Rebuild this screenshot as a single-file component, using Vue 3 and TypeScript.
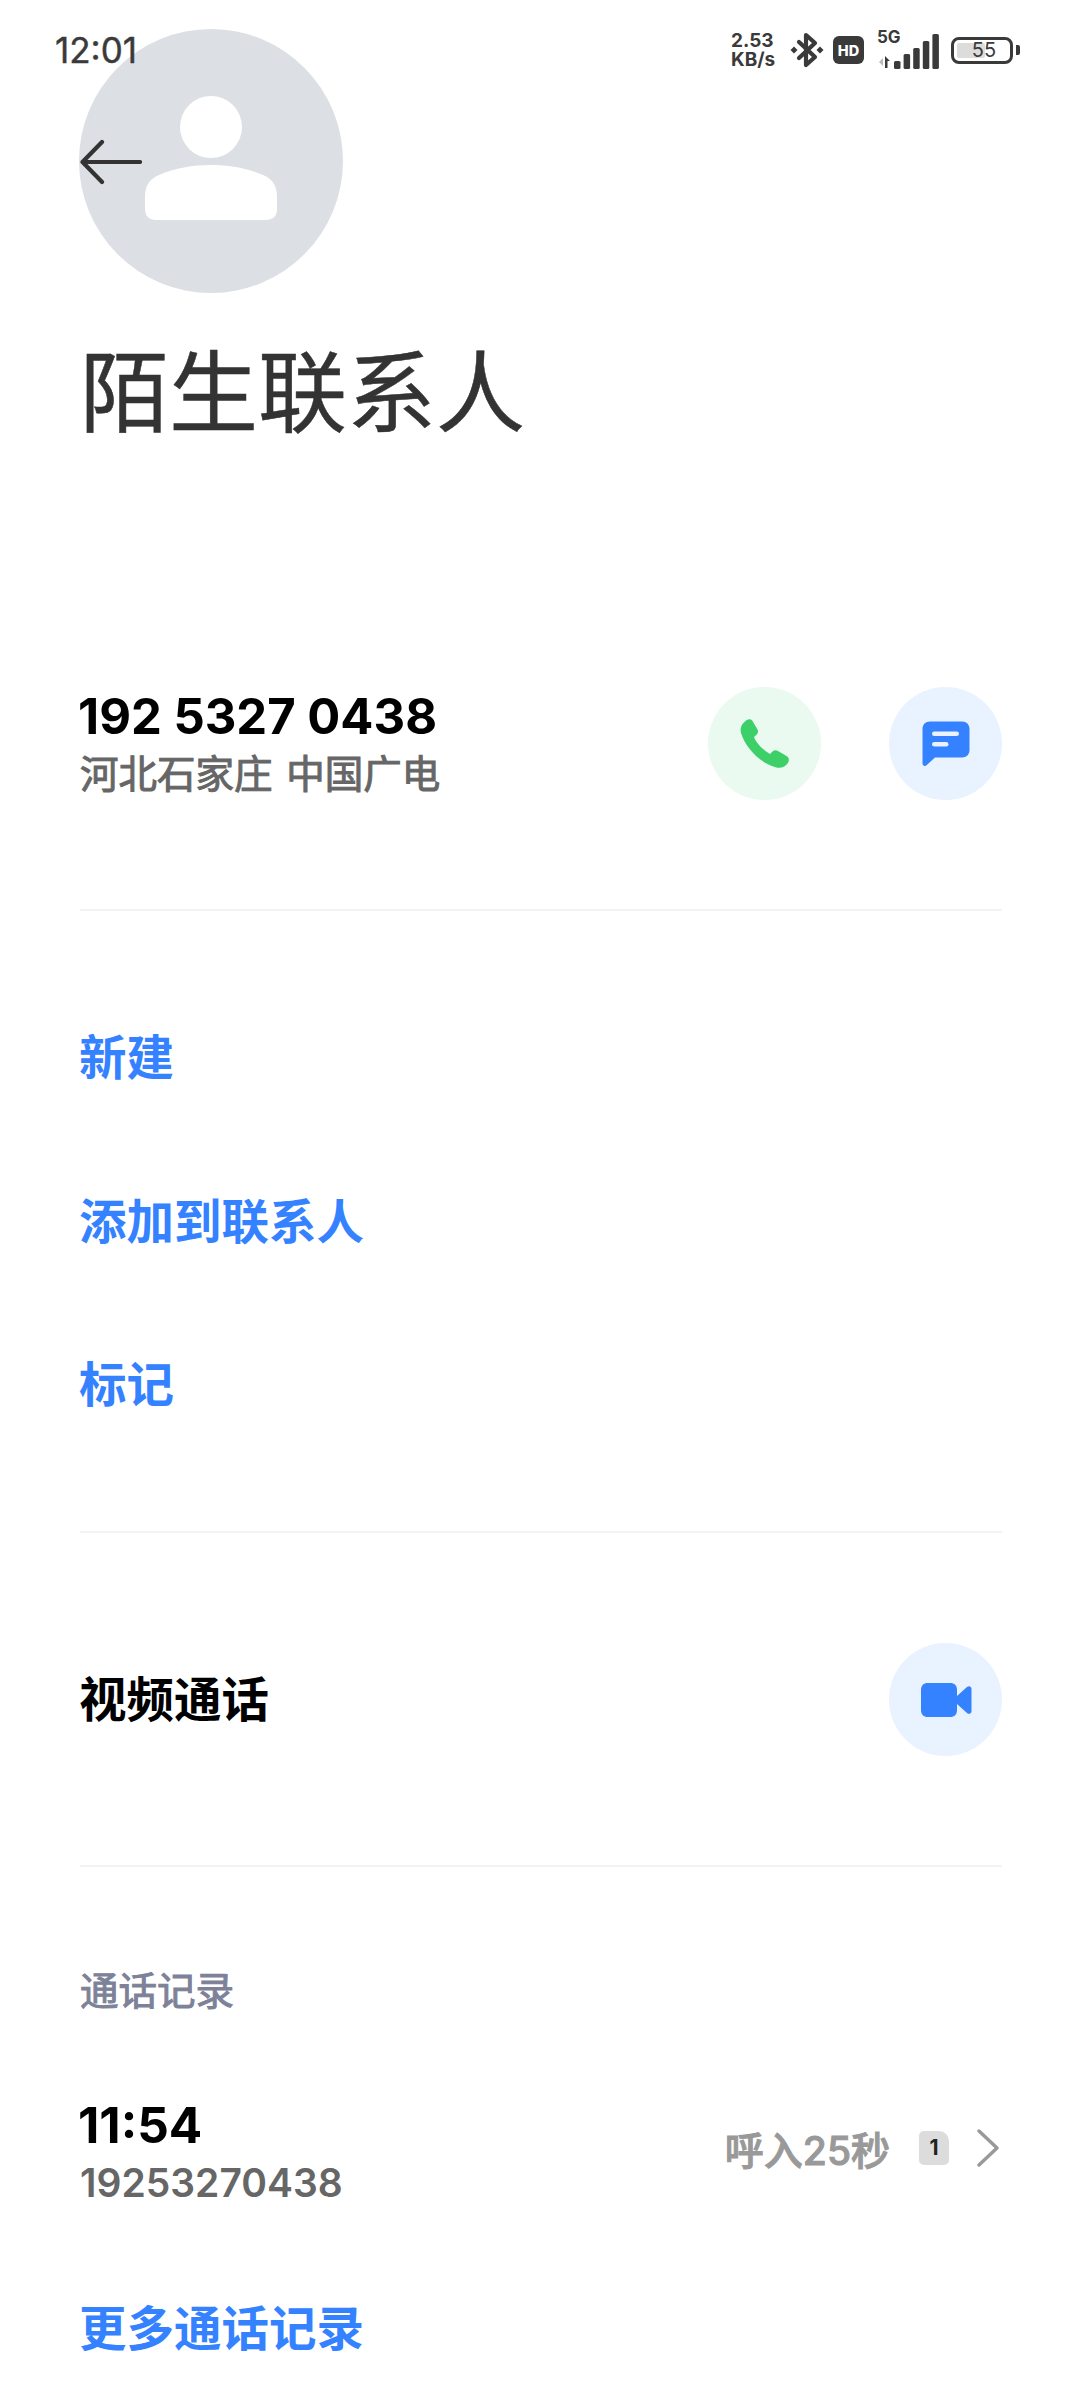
<script setup lang="ts">
const links: string[] = ['新建', '添加到联系人', '标记']
const bars: number[] = [8, 15, 21, 28, 35]
</script>

<template>
  <main class="page">
    <header class="status">
      <span class="clock">12:01</span>
      <div class="status-right">
        <div class="speed"><span>2.53</span><span>KB/s</span></div>
        <svg class="bt" viewBox="0 0 34 36" width="34" height="36">
          <path d="M9 10 L25 25 L16 33 V3 L25 11 L9 26" fill="none" stroke="#3a3a3a" stroke-width="4.200" stroke-linejoin="round" stroke-linecap="round" />
          <path d="M4 14.500 L7.500 18 L4 21.500 L0.500 18 Z M30 14.500 L33.500 18 L30 21.500 L26.500 18 Z" fill="#3a3a3a" />
        </svg>
        <span class="hd">HD</span>
        <div class="signal">
          <span class="fiveg">5G</span>
          <svg class="bars" viewBox="0 0 62 36" width="62" height="36">
            <path d="M1 29 L5 25 V33 Z" fill="#bbb" />
            <path d="M7 23 L12 28 H9.500 V35 H7 Z" fill="#3a3a3a" />
            <rect v-for="(h, i) in bars" :key="i" :x="16 + i * 9.6" :y="36 - h" width="6.500" :height="h" rx="1.500" fill="#3a3a3a" />
          </svg>
        </div>
        <div class="battery">
          <div class="cell"><span class="fill" /><span class="level">55</span></div>
          <span class="nub" />
        </div>
      </div>
    </header>

    <svg class="back" viewBox="0 0 62 46" width="62" height="46">
      <path d="M60 23 H3 M22 3 L2.500 23 L22 43" fill="none" stroke="#333" stroke-width="4.200" stroke-linecap="round" stroke-linejoin="round" />
    </svg>

    <section class="hero">
      <div class="avatar">
        <svg viewBox="0 0 132 126" width="132" height="126">
          <circle cx="66" cy="32" r="31" fill="#fff" />
          <path d="M0 102 C0 90 5 84 14 80 C30 73 48 70 66 70 C84 70 102 73 118 80 C127 84 132 90 132 102 V114 C132 121 128 125 121 125 H11 C4 125 0 121 0 114 Z" fill="#fff" />
        </svg>
      </div>
      <h1 class="name">陌生联系人</h1>
    </section>

    <section class="row number-row">
      <div class="number-info">
        <div class="number">192 5327 0438</div>
        <div class="region">河北石家庄 中国广电</div>
      </div>
      <div class="actions">
        <div class="round green">
          <svg viewBox="0 0 52 52" width="52" height="52">
            <path d="M6 3.500 C8.500 1 12 0.500 13.500 3 L18.500 11.500 C19.500 13.500 19 15.500 17.500 16.800 L15 19 C17.500 25.500 24 32 31 36 L33.500 33.500 C35 32 37 31.800 39 33 L47.500 38 C50.500 39.800 50.500 43 48.500 45.500 C46 49 42 50.500 37.500 49.500 C22 46 6.500 30 2 15 C0.800 10.500 2.500 6 6 3.500 Z" fill="#3DD068" />
          </svg>
        </div>
        <div class="round blue">
          <svg viewBox="0 0 48 46" width="48" height="46">
            <path d="M8 0.500 H40 C44.500 0.500 47.500 3.500 47.500 8 V29 C47.500 33.500 44.500 36.500 40 36.500 H13 L4.500 44.300 C3 45.700 0.500 44.800 0.500 42.500 V8 C0.500 3.500 3.500 0.500 8 0.500 Z" fill="#3482FF" />
            <rect x="10" y="10.500" width="27" height="4.600" rx="2.300" fill="#E9F2FF" />
            <rect x="10" y="21" width="16.500" height="4.600" rx="2.300" fill="#E9F2FF" />
          </svg>
        </div>
      </div>
    </section>

    <hr class="rule first" />

    <nav class="links">
      <a v-for="link in links" :key="link" class="link">{{ link }}</a>
    </nav>

    <hr class="rule second" />

    <section class="row video-row">
      <span class="video-label">视频通话</span>
      <div class="round blue">
        <svg viewBox="0 0 52 36" width="52" height="36">
          <path d="M8 1 H30 C34.500 1 37 3.500 37 8 V28 C37 32.500 34.500 35 30 35 H8 C3.500 35 1 32.500 1 28 V8 C1 3.500 3.500 1 8 1 Z" fill="#3482FF" />
          <path d="M37 14 L47 5 C49 3.300 51.500 4.300 51.500 7 V29 C51.500 31.700 49 32.700 47 31 L37 22 Z" fill="#3482FF" />
        </svg>
      </div>
    </section>

    <hr class="rule third" />

    <section class="history">
      <h2 class="history-title">通话记录</h2>
      <div class="row call">
        <div>
          <div class="call-time">11:54</div>
          <div class="call-number">19253270438</div>
        </div>
        <div class="call-meta">
          <span class="call-kind">呼入25秒</span>
          <span class="sim">1</span>
          <svg class="chevron" viewBox="0 0 24 38" width="24" height="38">
            <path d="M3 2 L21 19 L3 36" fill="none" stroke="#999" stroke-width="3.400" stroke-linecap="round" stroke-linejoin="round" />
          </svg>
        </div>
      </div>
      <a class="link more">更多通话记录</a>
    </section>
  </main>
</template>

<style scoped>
.page {
  position: relative;
  width: 1080px;
  height: 2400px;
  overflow: hidden;
  background: #fff;
  font-family: Inter, "Noto Sans CJK SC", sans-serif;
  color: #000;
}
.status {
  position: absolute;
  z-index: 2;
  left: 55px;
  right: 60px;
  top: 28px;
  height: 44px;
  display: flex;
  align-items: center;
  justify-content: space-between;
}
.clock {
  font-size: 35px;
  color: #3a3a3a;
  -webkit-text-stroke: 0.4px #3a3a3a;
}
.status-right {
  display: flex;
  align-items: center;
  color: #3a3a3a;
}
.speed {
  display: flex;
  flex-direction: column;
  width: 50px;
  font-size: 19px;
  line-height: 19px;
  font-weight: 700;
  margin-right: 9px;
}
.bt {
  margin-right: 9px;
}
.hd {
  width: 31px;
  height: 28px;
  margin-right: 12px;
  display: flex;
  align-items: center;
  justify-content: center;
  border-radius: 6px;
  background: #3a3a3a;
  color: #fff;
  font-size: 14.500px;
  font-weight: 800;
}
.signal {
  position: relative;
  width: 64px;
  height: 38px;
  margin-right: 11px;
}
.fiveg {
  position: absolute;
  left: 1px;
  top: -2px;
  font-size: 17px;
  line-height: 17px;
  font-weight: 700;
}
.bars {
  display: block;
  position: absolute;
  right: 0;
  bottom: 0;
}
.battery {
  display: flex;
  align-items: center;
  gap: 3px;
}
.cell {
  position: relative;
  width: 62px;
  height: 27px;
  box-sizing: border-box;
  border: 3px solid #3a3a3a;
  border-radius: 8px;
  display: flex;
  align-items: center;
  justify-content: center;
}
.fill {
  position: absolute;
  left: 3px;
  top: 3px;
  bottom: 3px;
  width: 28px;
  background: #dcdcdc;
  border-radius: 2px;
}
.level {
  position: relative;
  font-size: 20px;
  line-height: 20px;
  padding-left: 4px;
}
.nub {
  width: 4px;
  height: 10px;
  border-radius: 0 2px 2px 0;
  background: #3a3a3a;
}
.back {
  position: absolute;
  z-index: 2;
  left: 80px;
  top: 139px;
}
.hero {
  padding: 29px 80px 0;
}
.avatar {
  width: 264px;
  height: 264px;
  margin-left: -1.500px;
  box-sizing: border-box;
  padding-bottom: 6px;
  border-radius: 50%;
  background: #DCDFE4;
  display: flex;
  align-items: center;
  justify-content: center;
}
.name {
  margin: 41px 0 0;
  font-size: 89px;
  line-height: 118px;
  font-weight: 400;
  color: #333;
  -webkit-text-stroke: 0.5px #333;
}
.row {
  display: flex;
  align-items: center;
  justify-content: space-between;
}
.number-row {
  margin: 235px 78px 0 80px;
  height: 113px;
}
.number-info {
  margin-bottom: 3px;
}
.number {
  margin-left: -2px;
  font-size: 49px;
  line-height: 60px;
  font-weight: 700;
}
.region {
  margin-top: 3px;
  font-size: 38.500px;
  line-height: 48px;
  font-weight: 400;
  word-spacing: 3px;
  color: #666;
  -webkit-text-stroke: 1px #666;
}
.actions {
  display: flex;
  gap: 68px;
}
.round {
  width: 113px;
  height: 113px;
  border-radius: 50%;
  display: flex;
  align-items: center;
  justify-content: center;
}
.green {
  background: #EAFAF0;
}
.blue {
  background: #E9F2FF;
}
.rule {
  margin: 0 78px 0 80px;
  border: 0;
  height: 2px;
  background: #F2F3F5;
}
.first {
  margin-top: 109px;
}
.links {
  display: flex;
  flex-direction: column;
  gap: 100.500px;
  padding: 115px 0 0 79px;
}
.link {
  font-size: 47.500px;
  line-height: 63px;
  font-weight: 700;
  color: #3482FF;
}
.second {
  margin-top: 115px;
}
.video-row {
  margin: 110px 78px 0 79px;
  height: 113px;
}
.video-label {
  padding-bottom: 6px;
  font-size: 47.500px;
  font-weight: 700;
}
.third {
  margin-top: 109px;
}
.history {
  padding: 0 80px;
}
.history-title {
  margin: 98px 0 0;
  font-size: 38.500px;
  line-height: 52px;
  font-weight: 400;
  color: #7D8299;
  -webkit-text-stroke: 1px #7D8299;
}
.call {
  margin: 77px 0 0;
}
.call-time {
  margin-left: -2px;
  font-size: 49.500px;
  line-height: 63px;
  font-weight: 700;
}
.call-number {
  font-size: 39px;
  line-height: 52px;
  font-weight: 600;
  color: #666;
}
.call-meta {
  display: flex;
  align-items: center;
  margin-bottom: 8px;
}
.call-kind {
  font-size: 39px;
  font-weight: 500;
  color: #999;
  -webkit-text-stroke: 1px #999;
}
.sim {
  width: 30px;
  height: 34px;
  margin: 0 27px 0 29px;
  display: flex;
  align-items: center;
  justify-content: center;
  background: #DCDCDC;
  border-radius: 5px 10px 5px 5px;
  font-size: 21px;
  font-weight: 700;
  color: #222;
}
.more {
  display: block;
  margin-top: 88px;
  margin-left: -1px;
}
</style>
